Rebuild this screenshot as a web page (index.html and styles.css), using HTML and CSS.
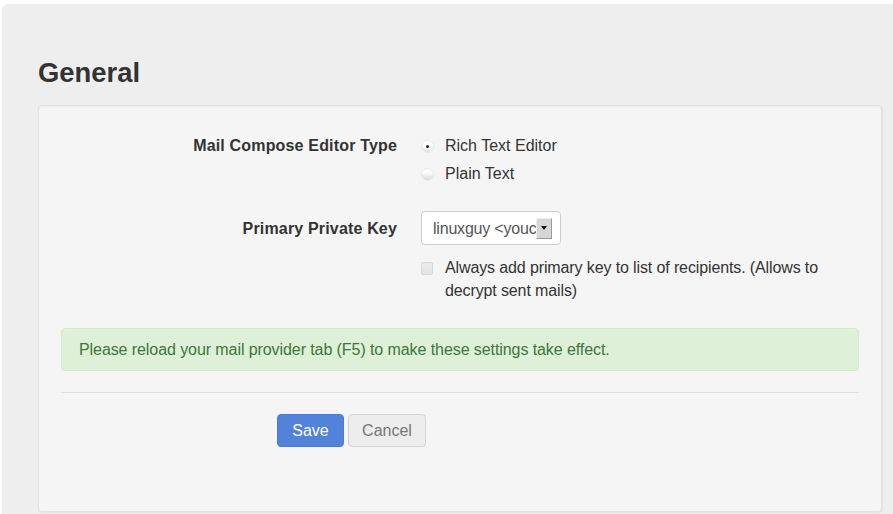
FILE: index.html
```html
<!DOCTYPE html>
<html>
<head>
<meta charset="utf-8">
<link rel="stylesheet" href="styles.css">
</head>
<body>
<div class="jumbo">
  <h3 class="title">General</h3>
  <div class="well">
    <div class="row row-editor">
      <div class="label">Mail Compose Editor Type</div>
      <div class="control">
        <div class="option"><span class="radio checked"></span><span>Rich Text Editor</span></div>
        <div class="option"><span class="radio"></span><span>Plain Text</span></div>
      </div>
    </div>
    <div class="row row-key">
      <div class="label">Primary Private Key</div>
      <div class="control">
        <div class="select">
          <span class="select-text">linuxguy &lt;youc</span>
          <span class="select-btn"><span class="tri"></span></span>
        </div>
      </div>
    </div>
    <div class="row row-check">
      <div class="label"></div>
      <div class="control">
        <div class="check-option"><span class="checkbox"></span><span class="check-text">Always add primary key to list of recipients. (Allows to decrypt sent mails)</span></div>
      </div>
    </div>
    <div class="alert">Please reload your mail provider tab (F5) to make these settings take effect.</div>
    <div class="divider"></div>
    <div class="buttons">
      <span class="btn btn-primary">Save</span>
      <span class="btn btn-default">Cancel</span>
    </div>
  </div>
</div>
</body>
</html>
```
FILE: styles.css
```css
html, body {
  margin: 0;
  padding: 0;
  background: #ffffff;
  overflow: hidden;
  height: 514px;
}
body {
  font-family: "Liberation Sans", Arial, sans-serif;
  font-size: 16px;
  line-height: 23px;
  color: #333333;
}
.jumbo {
  margin: 4px 0 0 2px;
  height: 510px;
  box-sizing: border-box;
  background: #eeeeee;
  border-radius: 6px 0 0 0;
  padding: 54px 0 0 36px;
}
.title {
  margin: 0 0 17px 0;
  font-size: 27.4px;
  line-height: 30px;
  font-weight: bold;
  color: #333333;
}
.well {
  width: 844px;
  height: 407px;
  box-sizing: border-box;
  background: #f5f5f5;
  border: 1px solid #e1e1e1;
  border-radius: 4px;
  box-shadow: inset 0 1px 1px rgba(0,0,0,0.03), 1px 1px 1px rgba(0,0,0,0.04);
  padding: 28px 22px 0 22px;
}
.row {
  display: flex;
  gap: 24px;
}
.label {
  flex: 0 0 336px;
  text-align: right;
  font-weight: bold;
  letter-spacing: 0.17px;
}
.control {
  flex: 1 1 auto;
  min-width: 0;
}
.row-key {
  margin-top: 26px;
  align-items: center;
}
.row-check {
  margin-top: 11px;
}
.option {
  display: flex;
  align-items: center;
  height: 23px;
  margin-bottom: 5px;
}
.option:last-child {
  margin-bottom: 0;
}
.radio {
  width: 11px;
  height: 11px;
  border-radius: 50%;
  margin: 1px 12px 0 1px;
  background: linear-gradient(#fdfdfd 35%, #d6d6d6);
  box-shadow: 0 0 0 1px #e9e9e9;
  position: relative;
  flex: 0 0 auto;
}
.radio.checked {
  background: linear-gradient(#ffffff 45%, #e0e0e0);
}
.radio.checked::after {
  content: "";
  position: absolute;
  left: 4px;
  top: 4px;
  width: 3px;
  height: 3px;
  border-radius: 50%;
  background: #222222;
}
.select {
  width: 140px;
  height: 34px;
  box-sizing: border-box;
  border: 1px solid #cccccc;
  border-radius: 4px;
  background: #ffffff;
  display: flex;
  align-items: center;
  padding-left: 11px;
  color: #555555;
}
.select-text {
  width: 102px;
  white-space: nowrap;
  letter-spacing: -0.2px;
  flex: 0 0 auto;
}
.select-btn {
  width: 16px;
  height: 21px;
  box-sizing: border-box;
  background: #d6d6d6;
  border-top: 1px solid #f0f0f0;
  border-left: 1px solid #f0f0f0;
  border-right: 1px solid #9a9a9a;
  border-bottom: 1px solid #9a9a9a;
  display: flex;
  align-items: center;
  justify-content: center;
  margin-left: 1px;
  flex: 0 0 auto;
}
.tri {
  width: 0;
  height: 0;
  border-left: 3.5px solid transparent;
  border-right: 3.5px solid transparent;
  border-top: 4px solid #111111;
}
.check-option {
  display: flex;
  align-items: flex-start;
}
.checkbox {
  width: 12px;
  height: 13px;
  box-sizing: border-box;
  border: 1px solid #d8d8d8;
  border-radius: 2px;
  background: linear-gradient(#ececec, #e3e3e3);
  margin: 6px 12px 0 0;
  flex: 0 0 auto;
}
.check-text {
  flex: 1 1 auto;
  letter-spacing: -0.12px;
}
.alert {
  margin-top: 26px;
  background: #dff0d8;
  border: 1px solid #d6e9c6;
  border-radius: 4px;
  color: #3c763d;
  padding: 9px 17px;
  letter-spacing: -0.08px;
}
.divider {
  margin-top: 21px;
  height: 1px;
  background: #e0e0e0;
}
.buttons {
  margin-top: 21px;
  padding-left: 216px;
  display: flex;
  gap: 4px;
}
.btn {
  display: inline-block;
  height: 33px;
  box-sizing: border-box;
  line-height: 31px;
  text-align: center;
  border-radius: 4px;
  border: 1px solid transparent;
  font-size: 16px;
}
.btn-primary {
  width: 67px;
  background: #5382db;
  border-color: #4d7bd3;
  color: #ffffff;
}
.btn-default {
  width: 78px;
  background: #ededed;
  border-color: #d2d2d2;
  color: #777777;
}
```
